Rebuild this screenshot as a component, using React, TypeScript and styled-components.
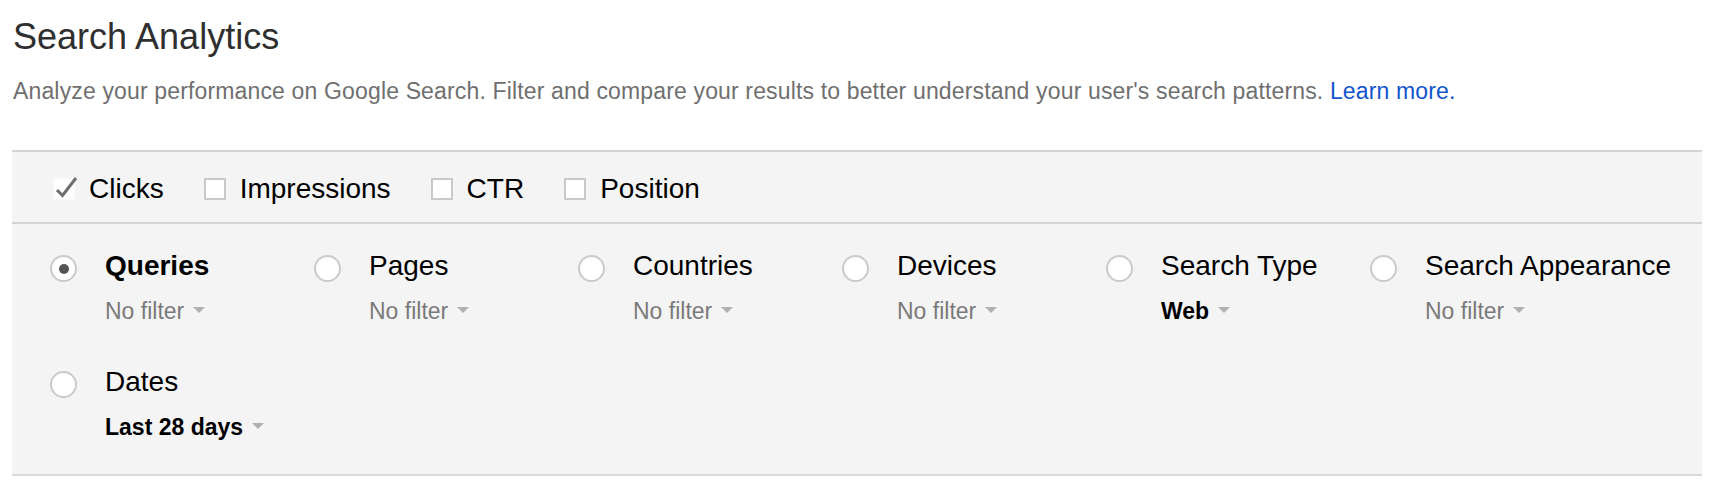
import styled, { createGlobalStyle } from "styled-components";

const GlobalStyle = createGlobalStyle`
  body {
    margin: 0;
    background: #ffffff;
    font-family: "Liberation Sans", Arial, Helvetica, sans-serif;
  }
`;

const Page = styled.div`
  padding: 0 16px 0 12px;
`;

const Title = styled.h1`
  margin: 17px 0 0 1px;
  font-size: 36px;
  line-height: 40px;
  font-weight: 400;
  color: #2f2f2f;
`;

const Intro = styled.p`
  margin: 21px 0 0 1px;
  font-size: 23px;
  line-height: 26px;
  letter-spacing: 0.15px;
  color: #6f6f6f;
  a {
    color: #1155cc;
    text-decoration: none;
  }
`;

const Panel = styled.div`
  margin-top: 46px;
  background: #f4f4f4;
  border-top: 2px solid #d3d3d3;
  border-bottom: 2px solid #d9d9d9;
`;

const MetricBar = styled.div`
  height: 72px;
  box-sizing: border-box;
  display: flex;
  align-items: center;
  gap: 40px;
  padding: 4px 0 0 41px;
  border-bottom: 2px solid #d3d3d3;
`;

const Metric = styled.label`
  display: flex;
  align-items: center;
  gap: 14px;
  font-size: 28px;
  line-height: 28px;
  color: #000000;
  cursor: pointer;
`;

const Box = styled.span<{ $checked?: boolean }>`
  position: relative;
  width: 22px;
  height: 22px;
  box-sizing: border-box;
  background: #ffffff;
  border: 2px solid ${(p) => (p.$checked ? "#fbfbfb" : "#c9c9c9")};
  svg {
    position: absolute;
    left: 0;
    top: -5px;
  }
`;

const Dimensions = styled.div`
  display: grid;
  grid-template-columns: repeat(6, 264px);
  row-gap: 42px;
  padding: 26px 0 34px 38px;
`;

const Dimension = styled.div`
  display: flex;
  align-items: flex-start;
  gap: 28px;
`;

const Radio = styled.span<{ $on?: boolean }>`
  margin-top: 5px;
  width: 27px;
  height: 27px;
  flex: none;
  box-sizing: border-box;
  border-radius: 50%;
  border: 2px solid #cacaca;
  background: #ffffff;
  display: flex;
  align-items: center;
  justify-content: center;
  &::after {
    content: "";
    display: ${(p) => (p.$on ? "block" : "none")};
    width: 10px;
    height: 10px;
    border-radius: 50%;
    background: #555555;
  }
`;

const Texts = styled.div`
  display: flex;
  flex-direction: column;
  gap: 16px;
`;

const Name = styled.div<{ $on?: boolean }>`
  font-size: 28px;
  line-height: 32px;
  font-weight: ${(p) => (p.$on ? 700 : 400)};
  color: #000000;
  white-space: nowrap;
`;

const Filter = styled.div<{ $set?: boolean }>`
  display: flex;
  align-items: center;
  font-size: 23px;
  line-height: 26px;
  font-weight: ${(p) => (p.$set ? 700 : 400)};
  color: ${(p) => (p.$set ? "#000000" : "#7a7a7a")};
  &::after {
    content: "";
    margin: 0 0 3px 9px;
    border-left: 6px solid transparent;
    border-right: 6px solid transparent;
    border-top: 6px solid #b0b0b0;
  }
`;

const metrics = [
  { name: "Clicks", checked: true },
  { name: "Impressions", checked: false },
  { name: "CTR", checked: false },
  { name: "Position", checked: false },
];

const dimensions = [
  { name: "Queries", filter: "No filter", on: true, set: false },
  { name: "Pages", filter: "No filter", on: false, set: false },
  { name: "Countries", filter: "No filter", on: false, set: false },
  { name: "Devices", filter: "No filter", on: false, set: false },
  { name: "Search Type", filter: "Web", on: false, set: true },
  { name: "Search Appearance", filter: "No filter", on: false, set: false },
  { name: "Dates", filter: "Last 28 days", on: false, set: true },
];

function App() {
  return (
    <Page>
      <GlobalStyle />
      <Title>Search Analytics</Title>
      <Intro>
        Analyze your performance on Google Search. Filter and compare your
        results to better understand your user's search patterns.{" "}
        <a href="#">Learn more.</a>
      </Intro>
      <Panel>
        <MetricBar>
          {metrics.map((m) => (
            <Metric key={m.name}>
              <Box $checked={m.checked}>
                {m.checked && (
                  <svg width="24" height="24" viewBox="0 0 24 24">
                    <path
                      d="M2 15 L7.5 20.5 L21 3"
                      fill="none"
                      stroke="#6e6e6e"
                      strokeWidth="3"
                    />
                  </svg>
                )}
              </Box>
              {m.name}
            </Metric>
          ))}
        </MetricBar>
        <Dimensions>
          {dimensions.map((d) => (
            <Dimension key={d.name}>
              <Radio $on={d.on} />
              <Texts>
                <Name $on={d.on}>{d.name}</Name>
                <Filter $set={d.set}>{d.filter}</Filter>
              </Texts>
            </Dimension>
          ))}
        </Dimensions>
      </Panel>
    </Page>
  );
}

export default App;
